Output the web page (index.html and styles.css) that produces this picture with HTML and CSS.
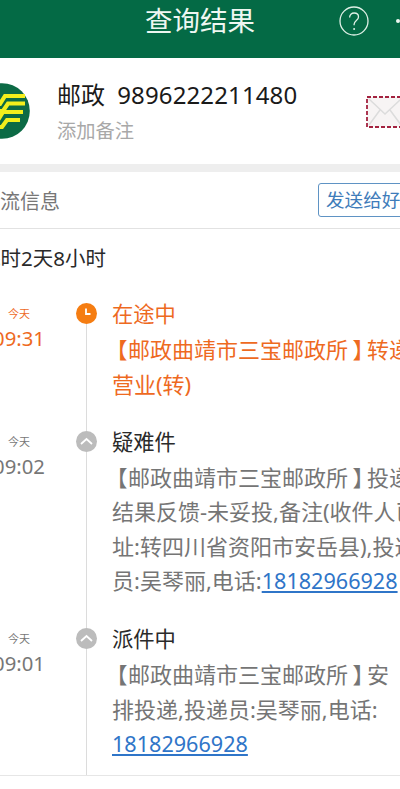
FILE: index.html
```html
<!DOCTYPE html>
<html lang="zh-CN">
<head>
<meta charset="utf-8">
<title>查询结果</title>
<link rel="stylesheet" href="styles.css">
</head>
<body>
<div class="page">
  <header class="topbar">
    <span></span>
    <h1 class="topbar-title">查询结果</h1>
    <div class="topbar-actions">
      <svg class="help" viewBox="0 0 30 30" aria-hidden="true">
        <circle cx="15" cy="15" r="14" fill="none" stroke="#dff0e6" stroke-width="1.3"/>
        <path d="M10.6 11.4c0-2.7 2-4.4 4.5-4.4s4.4 1.6 4.4 3.9c0 3.6-4.4 3.6-4.4 7.4v1" fill="none" stroke="#dff0e6" stroke-width="1.3"/>
        <circle cx="15.1" cy="23" r="1" fill="#dff0e6"/>
      </svg>
      <span class="more-dot"></span>
    </div>
  </header>

  <section class="parcel">
    <svg class="logo" viewBox="0 0 56 56" aria-hidden="true">
      <circle cx="28" cy="28" r="27.8" fill="#0c6a45"/>
      <g fill="none" stroke="#f2ee1c" stroke-width="4.2">
        <path d="M8 21H26L31 13H51"/>
        <path d="M14 28H29L34 20.5H51"/>
        <path d="M8 37H24L29 29H49"/>
        <path d="M14 44H28L33 37H46"/>
      </g>
    </svg>
    <div class="parcel-text">
      <div class="parcel-number"><span class="carrier">邮政</span>9896222211480</div>
      <div class="parcel-note">添加备注</div>
    </div>
    <svg class="envelope" viewBox="0 0 54 32" aria-hidden="true">
      <rect x="1" y="1" width="60" height="30" fill="#f7f4f4" stroke="#a3223f" stroke-width="1.8" stroke-dasharray="4 2"/>
      <path d="M3 3L19 18L35 3M3 29L14 14M35 29L24 14" fill="none" stroke="#dcdcdc" stroke-width="1.5"/>
    </svg>
  </section>

  <section class="info-bar">
    <span class="info-title">物流信息</span>
    <span class="share">发送给好友</span>
  </section>

  <div class="duration">耗时2天8小时</div>

  <ol class="timeline">
    <li class="event is-current">
      <div class="when"><span class="day">今天</span><span class="time">09:31</span></div>
      <div class="rail">
        <span class="lead"></span>
        <svg class="dot" viewBox="0 0 21 21" aria-hidden="true">
          <circle cx="10.5" cy="10.5" r="10.5" fill="#f57d12"/>
          <path d="M10 5.5V11H14.5" fill="none" stroke="#fff" stroke-width="1.8"/>
        </svg>
        <span class="tail"></span>
      </div>
      <div class="detail">
        <div class="status">在途中</div>
        <div class="line"><span class="bracket-open">【</span>邮政曲靖市三宝邮政所<span class="bracket-close">】</span>转递至曲靖</div>
        <div class="line">营业(转)</div>
      </div>
    </li>
    <li class="event">
      <div class="when"><span class="day">今天</span><span class="time">09:02</span></div>
      <div class="rail">
        <span class="lead"></span>
        <svg class="dot" viewBox="0 0 21 21" aria-hidden="true">
          <circle cx="10.5" cy="10.5" r="10.5" fill="#bcbcbc"/>
          <path d="M5 13L10.5 8L16 13" fill="none" stroke="#fff" stroke-width="1.8"/>
        </svg>
        <span class="tail"></span>
      </div>
      <div class="detail">
        <div class="status">疑难件</div>
        <div class="line"><span class="bracket-open">【</span>邮政曲靖市三宝邮政所<span class="bracket-close">】</span>投递</div>
        <div class="line">结果反馈-未妥投,备注(收件人已</div>
        <div class="line">址:转四川省资阳市安岳县),投递</div>
        <div class="line">员:吴琴丽,电话:<a class="phone" href="#">18182966928</a></div>
      </div>
    </li>
    <li class="event">
      <div class="when"><span class="day">今天</span><span class="time">09:01</span></div>
      <div class="rail">
        <span class="lead"></span>
        <svg class="dot" viewBox="0 0 21 21" aria-hidden="true">
          <circle cx="10.5" cy="10.5" r="10.5" fill="#bcbcbc"/>
          <path d="M5 13L10.5 8L16 13" fill="none" stroke="#fff" stroke-width="1.8"/>
        </svg>
        <span class="tail"></span>
      </div>
      <div class="detail">
        <div class="status">派件中</div>
        <div class="line"><span class="bracket-open">【</span>邮政曲靖市三宝邮政所<span class="bracket-close">】</span>安</div>
        <div class="line">排投递,投递员:吴琴丽,电话:</div>
        <div class="line"><a class="phone" href="#">18182966928</a></div>
      </div>
    </li>
  </ol>
</div>
</body>
</html>
```

FILE: styles.css
```css
* { box-sizing: border-box; }

html, body {
  margin: 0;
  height: 789px;
  overflow: hidden;
  background: #fff;
}

.page {
  width: 440px;
  margin-left: -20px;
  font-family: "Noto Sans", "Noto Sans CJK SC", sans-serif;
  color: #222;
}

.topbar {
  height: 58px;
  padding: 0 20px 16px;
  display: grid;
  grid-template-columns: 1fr auto 1fr;
  align-items: center;
  background: #046a45;
  color: #eef7f1;
}

.topbar-title {
  margin: 0;
  font-size: 27.5px;
  font-weight: 400;
  line-height: 42px;
}

.topbar-actions {
  display: flex;
  align-items: center;
  justify-content: flex-end;
}

.help {
  width: 30px;
  height: 30px;
}

.more-dot {
  width: 4px;
  height: 4px;
  margin-left: 27px;
  border-radius: 50%;
  background: #eef7f1;
}

.parcel {
  height: 106px;
  display: flex;
  align-items: center;
}

.logo {
  flex: none;
  width: 56px;
  height: 56px;
  margin-left: -6px;
}

.parcel-text {
  flex: 1;
  margin-left: 27px;
}

.parcel-number {
  font-size: 24px;
  line-height: 34px;
  letter-spacing: 0.12px;
  color: #1a1a1a;
  white-space: nowrap;
}

.carrier {
  margin-right: 12px;
}

.parcel-note {
  margin-top: 5px;
  font-size: 19.3px;
  line-height: 28px;
  color: #a8a8a8;
}

.envelope {
  flex: none;
  width: 54px;
  height: 32px;
  margin-top: 1px;
}

.info-bar {
  height: 65px;
  display: flex;
  align-items: center;
  border-top: 8px solid #eeeeee;
  border-bottom: 1px solid #e2e2e2;
}

.info-title {
  font-size: 20px;
  color: #777;
}

.share {
  flex: none;
  width: 102px;
  height: 34px;
  margin-left: auto;
  padding-left: 7px;
  overflow: hidden;
  white-space: nowrap;
  font-size: 18.6px;
  line-height: 32px;
  color: #3f7cba;
  border: 1px solid #5f93c4;
  border-radius: 3px 0 0 3px;
}

.duration {
  height: 68px;
  padding-top: 14px;
  font-size: 20.5px;
  line-height: 30px;
  color: #2a2a2a;
}

.timeline {
  margin: 0;
  padding: 0;
  list-style: none;
  border-bottom: 1px solid #e6e6e6;
}

.event {
  display: flex;
  align-items: stretch;
}

.when {
  flex: none;
  width: 78px;
  padding-top: 8px;
  display: flex;
  flex-direction: column;
  align-items: center;
  color: #777;
}

.day {
  font-size: 11px;
  line-height: 18px;
}

.time {
  margin-top: 1px;
  font-size: 20.3px;
  line-height: 28px;
}

.rail {
  flex: none;
  width: 21px;
  margin-left: 18px;
  display: flex;
  flex-direction: column;
  align-items: center;
}

.lead {
  width: 1px;
  height: 6px;
  background: #dcdcdc;
}

.dot {
  flex: none;
  width: 21px;
  height: 21px;
}

.tail {
  flex: 1;
  width: 1px;
  background: #dcdcdc;
}

.detail {
  flex: 1;
  min-width: 0;
  margin-left: 15px;
  margin-top: -1px;
  padding-bottom: 23.5px;
  overflow: hidden;
  white-space: nowrap;
  font-size: 22px;
  color: #757575;
}

.event:last-child .detail {
  padding-bottom: 13px;
}

.status {
  font-size: 21.3px;
  line-height: 36px;
  color: #2a2a2a;
}

.line {
  line-height: 34.5px;
}

.bracket-open {
  font-feature-settings: "palt";
  margin: 0 1px 0 4px;
}

.bracket-close {
  font-feature-settings: "palt";
  margin: 0 3px 0 5px;
}

.phone {
  font-size: 21.6px;
  color: #2f75c8;
  text-decoration: underline;
}

.is-current .when,
.is-current .status,
.is-current .line {
  color: #ee6a1f;
}

.is-current .lead {
  background: transparent;
}
```
